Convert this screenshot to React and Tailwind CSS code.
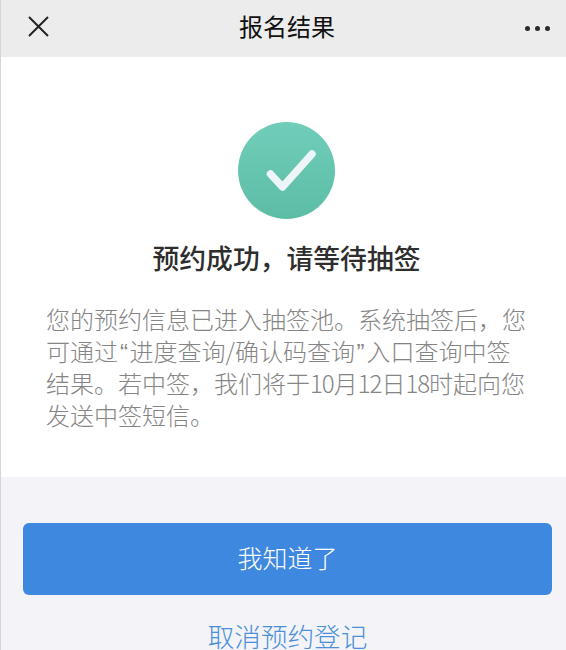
const cjk = "font-['Noto_Sans_CJK_SC','Liberation_Sans',sans-serif]";

export default function App() {
    return (
        <div className={`${cjk} w-[566px] h-[650px] overflow-hidden bg-[#f4f4f8] border-l border-[#d6d6d6] flex flex-col`}>
            {/* Header */}
            <div className="h-[57px] shrink-0 bg-[#ececec] flex items-center justify-between pl-[27px] pr-[16px] pb-[5px]">
                <svg width="21" height="21" viewBox="0 0 21 21" fill="none" stroke="#222" strokeWidth="2">
                    <path d="M1 1L20 20M20 1L1 20" />
                </svg>
                <h1 className="text-[24px] leading-none text-[#111]">报名结果</h1>
                <div className="flex gap-[5px] mt-[4px]">
                    <span className="w-[5px] h-[5px] rounded-full bg-[#2a2a2a]" />
                    <span className="w-[5px] h-[5px] rounded-full bg-[#2a2a2a]" />
                    <span className="w-[5px] h-[5px] rounded-full bg-[#2a2a2a]" />
                </div>
            </div>

            {/* Result */}
            <div className="h-[420px] shrink-0 bg-white pt-[65px]">
                <div className="flex flex-col items-center pl-[6px]">
                    <div className="w-[97px] h-[97px] rounded-full bg-gradient-to-b from-[#70cdb9] to-[#5cbda5] flex items-center justify-center">
                        <svg width="60" height="60" viewBox="0 0 60 60" fill="none" stroke="#edf5f8" strokeWidth="7.5" strokeLinecap="round" strokeLinejoin="round">
                            <path d="M13.5 33L25.5 46L55 13" />
                        </svg>
                    </div>
                    <h2 className="mt-[19px] text-[26.8px] leading-[40px] font-medium text-[#2e2e2e]">预约成功，请等待抽签</h2>
                </div>
                <p className="mt-[25px] pl-[45px] pr-[32px] text-[24px] leading-[32px] font-light text-[#858585]">
                    您的预约信息已进入抽签池。系统抽签后，您可通过<span className="font-['Liberation_Sans'] leading-none pl-[2px] pr-[1.5px]">“</span>进度查询/确认码查询<span className="font-['Liberation_Sans'] leading-none pl-[1.5px] pr-[2px]">”</span>入口查询中签结果。若中签，我们将于<span className="tracking-[-1px]">10</span>月<span className="tracking-[-1px]">12</span>日<span className="tracking-[-1px]">18</span>时起向您发送中签短信。
                </p>
            </div>

            {/* Actions */}
            <div className="pt-[46px] pl-[22px] pr-[14px] flex flex-col items-center">
                <button className="w-[529px] h-[72px] shrink-0 rounded-[6px] bg-[#3f88e0] text-white text-[25px] font-light pb-[3px]">我知道了</button>
                <a className="mt-[22px] text-[26.6px] leading-[38px] font-light text-[#4a90d8]">取消预约登记</a>
            </div>
        </div>
    );
}
